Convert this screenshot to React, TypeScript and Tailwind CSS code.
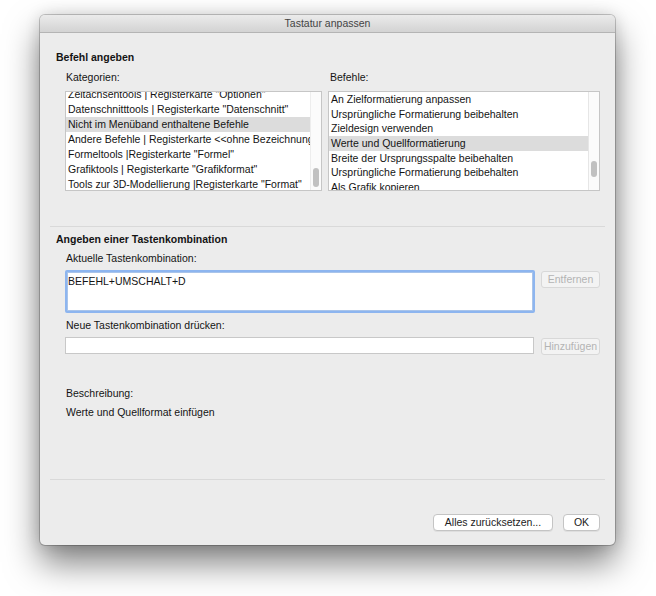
import React from "react";

const leftRows = [
  'Zeitachsentools | Registerkarte "Optionen"',
  'Datenschnitttools | Registerkarte "Datenschnitt"',
  "Nicht im Menüband enthaltene Befehle",
  "Andere Befehle | Registerkarte <<ohne Bezeichnung>>",
  'Formeltools |Registerkarte "Formel"',
  'Grafiktools | Registerkarte "Grafikformat"',
  'Tools zur 3D-Modellierung |Registerkarte "Format"',
];

const rightRows = [
  "An Zielformatierung anpassen",
  "Ursprüngliche Formatierung beibehalten",
  "Zieldesign verwenden",
  "Werte und Quellformatierung",
  "Breite der Ursprungsspalte beibehalten",
  "Ursprüngliche Formatierung beibehalten",
  "Als Grafik kopieren",
];

export default function App() {
  return (
    <div className="w-[656px] h-[596px] bg-white pt-[15px] pl-[40px] font-['Liberation_Sans',Arial,sans-serif] text-[10.5px] leading-[13px] text-[#141414] overflow-hidden">
      <div className="w-[575px] h-[530px] flex flex-col rounded-[5px] bg-[#ececec] shadow-[0_18px_34px_rgba(0,0,0,0.5),0_0_16px_rgba(0,0,0,0.14),0_0_0_1px_rgba(0,0,0,0.2)]">
        {/* Title bar */}
        <div className="h-[18px] shrink-0 flex items-center justify-center rounded-t-[5px] bg-linear-to-b from-[#ebebeb] to-[#d3d3d3] border-b border-[#b4b4b4] text-[#444]">
          Tastatur anpassen
        </div>

        <div className="flex-1 flex flex-col pt-[18px]">
          {/* Section 1 */}
          <div className="pl-[16px] font-bold">Befehl angeben</div>
          <div className="mt-[7px] pl-[25px] flex gap-[6px]">
            <div className="w-[257px] pl-[1px]">Kategorien:</div>
            <div className="w-[272px] pl-[2px]">Befehle:</div>
          </div>
          <div className="mt-[7px] pl-[25px] flex gap-[6px]">
            {/* Left list */}
            <div className="w-[257px] h-[100px] border border-[#c6c6c6] bg-white flex overflow-hidden">
              <div className="flex-1 overflow-hidden">
                <div className="mt-[-5.5px] flex flex-col">
                  {leftRows.map((r, i) => (
                    <div
                      key={i}
                      className={`h-[15px] shrink-0 flex items-center pl-[2px] whitespace-nowrap overflow-hidden ${
                        i === 2 ? "bg-[#dcdcdc]" : ""
                      }`}
                    >
                      {r}
                    </div>
                  ))}
                </div>
              </div>
              <div className="w-[11px] shrink-0 flex justify-center bg-[#fbfbfb] border-l border-[#ededed]">
                <div className="mt-[76px] w-[6px] h-[19px] rounded-full bg-[#c1c1c1]" />
              </div>
            </div>
            {/* Right list */}
            <div className="w-[272px] h-[100px] border border-[#c6c6c6] bg-white flex overflow-hidden">
              <div className="flex-1 overflow-hidden">
                <div className="mt-[0.5px] flex flex-col">
                  {rightRows.map((r, i) => (
                    <div
                      key={i}
                      className={`h-[14.6px] shrink-0 flex items-center pl-[2px] whitespace-nowrap overflow-hidden ${
                        i === 3 ? "bg-[#dcdcdc]" : ""
                      }`}
                    >
                      {r}
                    </div>
                  ))}
                </div>
              </div>
              <div className="w-[11px] shrink-0 flex justify-center bg-[#fbfbfb] border-l border-[#e6e6e6]">
                <div className="mt-[69px] w-[6px] h-[16px] rounded-full bg-[#c1c1c1]" />
              </div>
            </div>
          </div>

          <div className="mt-[35px] mx-[10px] h-px bg-[#d9d9d9]" />

          {/* Section 2 */}
          <div className="mt-[6px] pl-[16px] font-bold">Angeben einer Tastenkombination</div>
          <div className="mt-[6px] pl-[26px]">Aktuelle Tastenkombination:</div>
          <div className="mt-[5px] pl-[25px] flex items-start gap-[6px]">
            <div className="w-[470px] h-[43px] bg-white border-[2px] border-[#8db5ef] rounded-[2px] pl-[1px] pt-[3px] shadow-[inset_0_0_0_1px_#a9c4ea]">
              BEFEHL+UMSCHALT+D
            </div>
            <div className="mt-[1px] w-[59px] h-[17px] flex items-center justify-center rounded-[3px] border border-[#d8d8d8] bg-[#f3f3f3] text-[#b3b3b3]">
              Entfernen
            </div>
          </div>
          <div className="mt-[6px] pl-[26px]">Neue Tastenkombination drücken:</div>
          <div className="mt-[5px] pl-[25px] flex items-start gap-[7px]">
            <div className="w-[469px] h-[17px] bg-white border border-[#c8c8c8]" />
            <div className="mt-[1px] w-[59px] h-[17px] flex items-center justify-center rounded-[3px] border border-[#d8d8d8] bg-[#f3f3f3] text-[#b3b3b3]">
              Hinzufügen
            </div>
          </div>

          <div className="mt-[32px] pl-[26px]">Beschreibung:</div>
          <div className="mt-[6px] pl-[26px]">Werte und Quellformat einfügen</div>

          <div className="mt-[60px] mx-[10px] h-px bg-[#d9d9d9]" />

          <div className="mt-[34px] pr-[15px] flex justify-end gap-[10px]">
            <div className="w-[120px] h-[17px] flex items-center justify-center rounded-[4px] bg-white border border-[#c4c4c4] shadow-[0_1px_0_rgba(0,0,0,0.06)] text-[#222]">
              Alles zurücksetzen...
            </div>
            <div className="w-[37px] h-[17px] flex items-center justify-center rounded-[4px] bg-white border border-[#c4c4c4] shadow-[0_1px_0_rgba(0,0,0,0.06)] text-[#222]">
              OK
            </div>
          </div>
        </div>
      </div>
    </div>
  );
}
